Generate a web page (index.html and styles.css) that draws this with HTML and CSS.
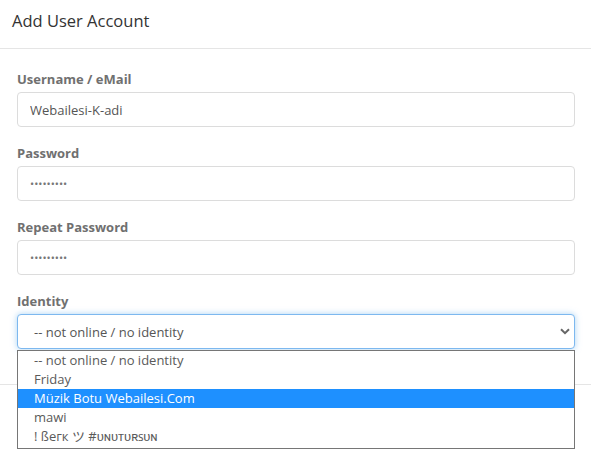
FILE: index.html
```html
<!DOCTYPE html>
<html>
<head>
<meta charset="utf-8">
<link rel="stylesheet" href="styles.css">
</head>
<body>
<div class="modal">
  <div class="modal-header"><h4 class="modal-title">Add User Account</h4></div>
  <div class="modal-body">
    <div class="group">
      <label class="label">Username / eMail</label>
      <input class="control" type="text" value="Webailesi-K-adi">
    </div>
    <div class="group">
      <label class="label">Password</label>
      <input class="control" type="password" value="123456789">
    </div>
    <div class="group">
      <label class="label">Repeat Password</label>
      <input class="control" type="password" value="123456789">
    </div>
    <div class="group">
      <label class="label">Identity</label>
      <div class="select-wrap">
        <div class="control select focus">
          <span class="select-value">-- not online / no identity</span>
          <svg class="chevron" width="10" height="7" viewBox="0 0 10 7"><path d="M1 1.2 L5 5.2 L9 1.2" fill="none" stroke="#666" stroke-width="2"/></svg>
        </div>
        <ul class="options">
          <li class="option">-- not online / no identity</li>
          <li class="option">Friday</li>
          <li class="option selected">Müzik Botu Webailesi.Com</li>
          <li class="option">mawi</li>
          <li class="option">! ßегк ツ #ᴜɴᴜᴛᴜʀꜱᴜɴ</li>
        </ul>
      </div>
    </div>
  </div>
  <div class="modal-footer"></div>
</div>
</body>
</html>
```
FILE: styles.css
```css
html, body {
  margin: 0;
  padding: 0;
  background: #fff;
}
body {
  font-family: "Open Sans", "Noto Sans CJK JP", sans-serif;
  color: #555;
  width: 591px;
  height: 458px;
  overflow: hidden;
}
.modal-header {
  height: 49px;
  box-sizing: border-box;
  padding: 9px 12px 0;
  border-bottom: 1px solid #e5e5e5;
}
.modal-title {
  margin: 0;
  font-size: 16.5px;
  font-weight: 400;
  line-height: 24px;
  color: #333;
}
.modal-body {
  padding: 20px 16px 35px 17px;
}
.group {
  margin-bottom: 16px;
}
.group:last-child {
  margin-bottom: 0;
}
.label {
  display: block;
  font-size: 13px;
  font-weight: 700;
  line-height: 20px;
  color: #707070;
  margin-bottom: 3px;
}
.control {
  display: block;
  box-sizing: border-box;
  width: 100%;
  height: 35px;
  padding: 0 12px;
  border: 1px solid #dcdcdc;
  border-radius: 4px;
  font-family: "Open Sans", sans-serif;
  font-size: 13px;
  color: #555;
  background: #fff;
  outline: none;
}
input[type="password"] {
  font-size: 11px;
  color: #777;
}
.select-wrap {
  position: relative;
}
.select {
  display: flex;
  align-items: center;
  justify-content: space-between;
  padding: 0 4px 0 16px;
}
.select.focus {
  border-color: #7db8ef;
  box-shadow: 0 0 6px rgba(102, 175, 233, 0.55);
}
.options {
  position: absolute;
  left: 0;
  right: 0;
  top: calc(100% + 1px);
  margin: 0;
  padding: 0 0 2px;
  list-style: none;
  background: #fff;
  border: 1px solid #767676;
}
.option {
  height: 19px;
  line-height: 19px;
  padding-left: 16px;
  font-size: 13px;
  color: #5a5a5a;
  white-space: nowrap;
}
.option.selected {
  background: #1e90ff;
  color: #fff;
}
.modal-footer {
  border-top: 1px solid #e5e5e5;
  height: 72px;
}
```
